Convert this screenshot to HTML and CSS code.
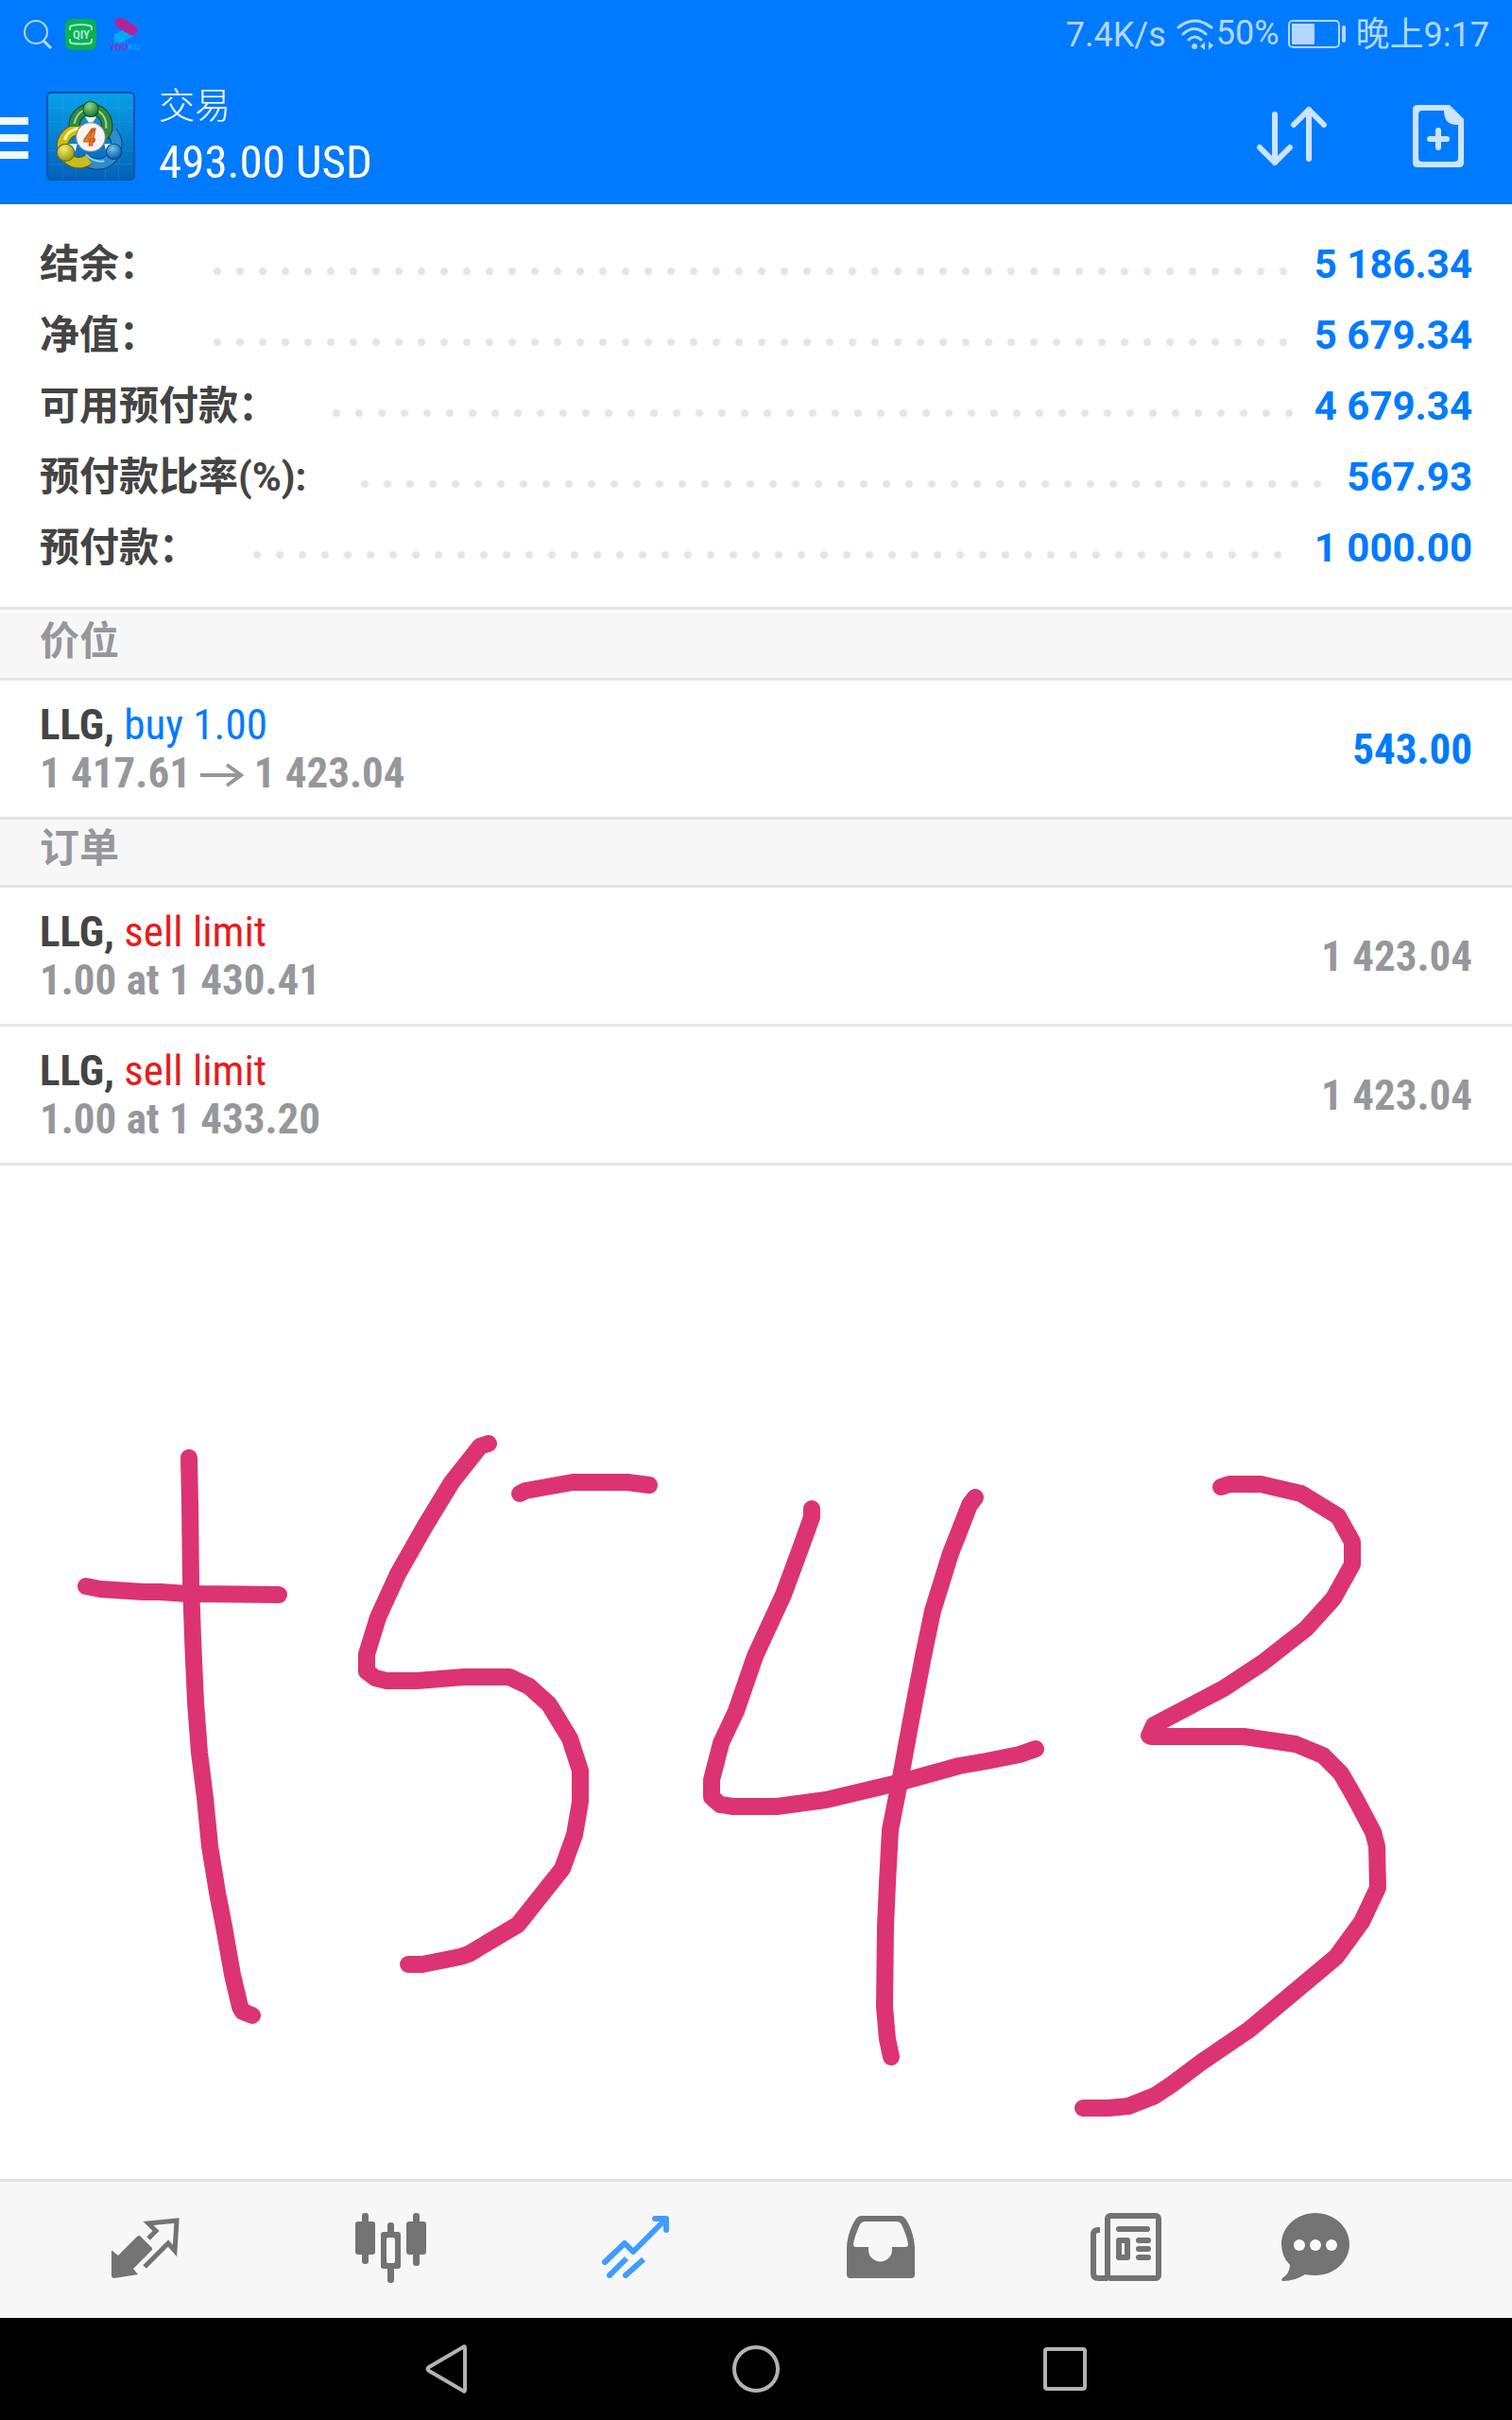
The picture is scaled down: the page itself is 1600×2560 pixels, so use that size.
FILE: index.html
```html
<!DOCTYPE html>
<html lang="zh-CN">
<head>
  <meta charset="UTF-8">
  <meta name="viewport" content="width=device-width, initial-scale=1">
  <title>交易</title>
  <link rel="stylesheet" href="styles.css">
</head>
<body>

<header class="top">
  <div class="status-bar">
    <div class="status-left">
      <svg width="32" height="38" viewBox="0 0 32 38" aria-hidden="true">
        <circle cx="14" cy="16" r="12" fill="none" stroke="#b3d7ff" stroke-width="2"/>
        <path d="M22 25l8 8" stroke="#b3d7ff" stroke-width="3"/>
      </svg>
      <svg width="34" height="38" viewBox="0 0 34 38" aria-hidden="true">
        <rect y="2" width="33" height="33" rx="7" fill="#07b04e"/>
        <path d="M5 14V12Q5 9 8 9Q17 7 25 9Q28 9 28 12V14M5 23V25Q5 28 8 28Q17 29 25 28Q28 28 28 25V23" fill="none" stroke="#a5e3d6" stroke-width="2"/>
        <text x="17" y="23" class="qiy">QIY</text>
      </svg>
      <svg width="38" height="38" viewBox="0 0 38 38" aria-hidden="true">
        <path d="M10 22L23 15" stroke="#00a8ff" stroke-width="11" stroke-linecap="round"/>
        <path d="M11 6L24 14" stroke="#b2249c" stroke-width="11" stroke-linecap="round"/>
        <text x="0" y="35" class="youku"><tspan fill="#a02bab">YOU</tspan><tspan fill="#00a8ff">KU</tspan></text>
      </svg>
    </div>
    <div class="status-right">
      <span class="net-speed">7.4K/s</span>
      <svg width="40" height="34" viewBox="0 0 40 34" fill="none" stroke="#b3d7ff" stroke-width="3" stroke-linecap="round" aria-hidden="true">
        <path d="M2 9Q19 -5 37 9M7 16Q19 5 31 16M13 22Q19 16 26 22"/>
        <circle cx="19" cy="29" r="3" fill="#b3d7ff" stroke="none"/>
        <path d="M25 29l5-5v9zM39 28l-5 5v-9z" fill="#b3d7ff" stroke="none"/>
      </svg>
      <span class="percent">50%</span>
      <svg class="battery" width="62" height="30" viewBox="0 0 62 30" aria-hidden="true">
        <rect x="1" y="1" width="53" height="28" rx="4" fill="none" stroke="#b3d7ff" stroke-width="2"/>
        <rect x="4" y="4" width="24" height="22" rx="1" fill="#b3d7ff"/>
        <rect x="57" y="6" width="4" height="18" rx="2" fill="#b3d7ff"/>
      </svg>
      <span class="clock">晚上9:17</span>
    </div>
  </div>

  <div class="app-bar">
    <button class="menu-btn" aria-label="菜单"><i></i><i></i><i></i></button>
    <svg class="logo" width="94" height="94" viewBox="0 0 92 92" aria-hidden="true">
      <defs>
        <linearGradient id="bg" x1="0" y1="0" x2="0" y2="1">
          <stop offset="0" stop-color="#0aa0ea"/>
          <stop offset="1" stop-color="#0461b8"/>
        </linearGradient>
        <radialGradient id="green" cx=".4" cy=".3" r=".7">
          <stop offset="0" stop-color="#8fd48f"/>
          <stop offset="1" stop-color="#1c7a2c"/>
        </radialGradient>
        <radialGradient id="yellow" cx=".4" cy=".3" r=".7">
          <stop offset="0" stop-color="#f2ee74"/>
          <stop offset="1" stop-color="#9c9410"/>
        </radialGradient>
        <radialGradient id="blue" cx=".4" cy=".3" r=".7">
          <stop offset="0" stop-color="#6fc6f5"/>
          <stop offset="1" stop-color="#0b5ca8"/>
        </radialGradient>
      </defs>
      <rect x="1" y="1" width="90" height="90" rx="4" fill="url(#bg)" stroke="#0656a8" stroke-width="2"/>
      <path d="M17 2V90M31 2V90M61 2V90M75 2V90M2 17H90M2 31H90M2 61H90M2 75H90" stroke="#3fb4f0" stroke-opacity=".2"/>
      <g fill="none">
        <path d="M38 68A17 17 0 1 0 68 42" stroke="#064a86" stroke-width="12"/>
        <path d="M38 68A17 17 0 1 0 68 42" stroke="#2f8bcb" stroke-width="10"/>
        <path d="M41 65Q48 73 60 72" stroke="#8fd0f5" stroke-width="2"/>
        <path d="M38 40A17 17 0 1 0 44 70" stroke="#6b6208" stroke-width="12"/>
        <path d="M38 40A17 17 0 1 0 44 70" stroke="#c9bc1c" stroke-width="10"/>
        <path d="M19 50Q22 40 33 38" stroke="#f7f08a" stroke-width="3"/>
        <path d="M29 36A17 17 0 1 1 59 46" stroke="#0f4f1a" stroke-width="12"/>
        <path d="M29 36A17 17 0 1 1 59 46" stroke="#338a3b" stroke-width="10"/>
        <path d="M29 33Q31 23 39 19M54 20Q63 26 62 38" stroke="#9bd69b" stroke-width="2"/>
      </g>
      <path d="M40 26h12l-6 9zM22 54l10 0-2 8zM60 54h10l-8 8z" fill="#eef6ee"/>
      <circle cx="46" cy="18" r="8" fill="url(#green)" stroke="#0f4f1a"/>
      <circle cx="20" cy="63" r="9" fill="url(#yellow)" stroke="#6b6208"/>
      <circle cx="70" cy="62" r="8" fill="url(#blue)" stroke="#064a86"/>
      <circle cx="46" cy="47" r="15" fill="#f6f4f4" stroke="#8b8b8b"/>
      <text x="45" y="56" class="logo-num">4</text>
    </svg>
    <div class="heading">
      <h1>交易</h1>
      <p>493.00 USD</p>
    </div>
    <button class="icon-btn" aria-label="排序">
      <svg width="76" height="66" viewBox="0 0 76 66" fill="none" stroke="#cce4ff" stroke-width="6" stroke-linecap="round" stroke-linejoin="round">
        <path d="M20 10V61M4 45L20 61L36 45M56 57V5M40 21L56 5L72 21"/>
      </svg>
    </button>
    <button class="icon-btn" aria-label="新订单">
      <svg width="54" height="66" viewBox="0 0 54 66">
        <path d="M5 0H39L54 15V61Q54 66 49 66H5Q0 66 0 61V5Q0 0 5 0ZM10 6Q6 6 6 10V56Q6 60 10 60H44Q48 60 48 56V21H45Q33 20 33 6Z" fill="#cce4ff" fill-rule="evenodd"/>
        <path d="M27 27V45M18 36H36" stroke="#cce4ff" stroke-width="6" stroke-linecap="round"/>
      </svg>
    </button>
  </div>
</header>

<main>
  <dl class="account">
    <div class="account-row"><dt>结余：</dt><dd>5 186.34</dd></div>
    <div class="account-row"><dt>净值：</dt><dd>5 679.34</dd></div>
    <div class="account-row"><dt>可用预付款：</dt><dd>4 679.34</dd></div>
    <div class="account-row"><dt>预付款比率(%):</dt><dd>567.93</dd></div>
    <div class="account-row"><dt>预付款：</dt><dd>1 000.00</dd></div>
  </dl>

  <h2 class="section-title">价位</h2>
  <ul class="deals">
    <li>
      <div>
        <p class="symbol"><b>LLG,</b> <span class="buy">buy 1.00</span></p>
        <p class="detail">1 417.61
          <svg width="46" height="26" viewBox="0 0 46 26" fill="none" stroke="#96979b" stroke-width="4" role="img" aria-label="至"><path d="M0 13H43M28 2L43 13L28 24"/></svg>
          1 423.04</p>
      </div>
      <span class="amount profit">543.00</span>
    </li>
  </ul>

  <h2 class="section-title">订单</h2>
  <ul class="deals">
    <li>
      <div>
        <p class="symbol"><b>LLG,</b> <span class="sell">sell limit</span></p>
        <p class="detail">1.00 at 1 430.41</p>
      </div>
      <span class="amount">1 423.04</span>
    </li>
    <li>
      <div>
        <p class="symbol"><b>LLG,</b> <span class="sell">sell limit</span></p>
        <p class="detail">1.00 at 1 433.20</p>
      </div>
      <span class="amount">1 423.04</span>
    </li>
  </ul>

  <!-- handwritten note -->
  <svg class="note" viewBox="0 0 1600 1072" role="img" aria-label="+543">
    <path d="M91 445L106 448L121 449L152 451L170 451L198 453L295 454"/>
    <path d="M200 309L201 359L202 441L204 500L207 568L211 621L217 669L222 720L230 769L237 805L246 856L254 890L257 895L267 899"/>
    <path d="M517 294L508 297L478 335L450 381L421 432L400 478L388 517L388 535L397 542L409 545L441 545L491 541L539 541L560 551L581 570L603 606L614 640L614 673L608 708L595 744L583 759L548 803L496 834L487 837L447 845L432 845"/>
    <path d="M550 347L556 344L606 335L664 335L687 338"/>
    <path d="M859 363L859 372L846 408L829 454L799 519L779 577L763 611L753 650L753 668L762 676L776 678L822 678L874 671L950 653L1015 635L1044 630L1079 623L1096 617"/>
    <path d="M1032 351L1026 359L1006 410L987 471L977 519L964 587L953 647L942 703L939 759L937 805L936 890L939 924L943 943"/>
    <path d="M1292 340L1301 337L1334 337L1377 347L1416 371L1431 398L1431 422L1411 458L1382 490L1336 526L1295 553L1221 592L1216 603L1218 604L1316 604L1371 612L1400 624L1419 643L1434 669L1453 705L1457 720L1458 764L1441 800L1414 837L1322 914L1272 948L1240 972L1222 984L1194 995L1173 997L1146 997"/>
  </svg>
</main>

<nav class="tabs">
  <button aria-label="行情">
    <svg width="80" height="80" viewBox="0 0 80 80">
      <path d="M4 41L10 46L30 26Q32 24 34 26L46 38Q47 40 45 41L26 60L31 66L6 70Q3 70 3 67V41Z"/>
      <path d="M42 28L50 20L42 12L72 9L70 41L63 33L38 58" fill="none" stroke="#737373" stroke-width="5"/>
    </svg>
  </button>
  <button aria-label="图表">
    <svg width="80" height="80" viewBox="0 0 80 80">
      <rect x="2" y="10" width="21" height="35" rx="3"/>
      <rect x="9" y="1" width="7" height="54" rx="3"/>
      <path d="M32 21H36V14Q36 11 39 11H40Q43 11 43 14V21H47Q50 21 50 24V57Q50 60 47 60H43V72Q43 75 40 75H39Q36 75 36 72V60H32Q29 60 29 57V24Q29 21 32 21ZM37 27Q35 27 35 29V52Q35 54 37 54H42Q44 54 44 52V29Q44 27 42 27Z" fill-rule="evenodd"/>
      <rect x="56" y="10" width="21" height="35" rx="3"/>
      <rect x="63" y="1" width="7" height="56" rx="3"/>
    </svg>
  </button>
  <button aria-label="交易">
    <svg width="80" height="80" viewBox="0 0 80 80" fill="none" stroke="#419cff" stroke-width="6">
      <path d="M7 53L28 33L37 42L71 8M60 7H72V19" stroke-linecap="round" stroke-linejoin="round"/>
      <path d="M12 67L30 49M29 67L48 50"/>
      <circle cx="12" cy="67" r="3" class="tip"/>
      <circle cx="29" cy="67" r="3" class="tip"/>
    </svg>
  </button>
  <button aria-label="历史">
    <svg width="80" height="80" viewBox="0 0 80 80">
      <path d="M4 37C5 24 9 14 14 7Q16 4 19 4H61Q64 4 66 7C71 14 75 24 76 37V66Q76 70 72 70H8Q4 70 4 66ZM11 34C12 27 15 20 18 13Q20 10 23 10H57Q60 10 62 13C65 20 68 27 69 34Q69 37 66 37H52V40A12 12 0 0 1 27 40V37H14Q11 37 11 34Z" fill-rule="evenodd"/>
    </svg>
  </button>
  <button aria-label="新闻">
    <svg width="80" height="80" viewBox="0 0 80 80" fill="none" stroke="#737373" stroke-width="6">
      <rect x="21" y="4" width="54" height="66" rx="3"/>
      <path d="M13 19H11Q6 19 6 24V65Q6 70 11 70H21"/>
      <rect x="33" y="30" width="9" height="18" stroke-linejoin="round"/>
      <path d="M33 18H63M54 30H64M54 39H64M54 48H64" stroke-linecap="round"/>
    </svg>
  </button>
  <button aria-label="消息">
    <svg width="80" height="80" viewBox="0 0 80 80">
      <path d="M40 1C60 1 76 16 76 34S60 67 40 67Q34 67 29 66Q18 73 6 73Q3 73 5 70Q13 65 13 56Q4 47 4 34C4 16 20 1 40 1Z"/>
      <circle cx="23" cy="35" r="6" fill="#fafafa"/>
      <circle cx="40" cy="35" r="6" fill="#fafafa"/>
      <circle cx="57" cy="35" r="6" fill="#fafafa"/>
    </svg>
  </button>
</nav>

<div class="system-nav">
  <button aria-label="返回">
    <svg width="50" height="54" viewBox="0 0 50 54"><path d="M42 4Q44 2 44 5V49Q44 52 42 50L6 29Q3 27 6 25Z"/></svg>
  </button>
  <button aria-label="主页">
    <svg width="50" height="54" viewBox="0 0 50 54"><circle cx="25" cy="27" r="23"/></svg>
  </button>
  <button aria-label="最近任务">
    <svg width="50" height="54" viewBox="0 0 50 54"><rect x="4" y="6" width="42" height="42" rx="2"/></svg>
  </button>
</div>

</body>
</html>
```
FILE: styles.css
```css
* {
  box-sizing: border-box;
}

body {
  margin: 0;
  min-height: 100vh;
  display: flex;
  flex-direction: column;
  background: #fff;
  color: #444;
  font-family: Roboto, "Noto Sans CJK SC", sans-serif;
}

h1, h2, p, dl, dd, ul {
  margin: 0;
  padding: 0;
}

button {
  display: flex;
  align-items: center;
  justify-content: center;
  padding: 0;
  border: none;
  background: none;
  cursor: pointer;
}

svg {
  display: block;
  flex-shrink: 0;
}

/* header */
.top {
  background: #007aff;
  border-bottom: 3px solid #006fe8;
}

.status-bar {
  height: 74px;
  padding: 0 24px;
  display: flex;
  align-items: center;
  justify-content: space-between;
  color: #b3d7ff;
  font-size: 36px;
  line-height: 40px;
}

.status-left {
  display: flex;
  gap: 13px;
}

.status-right {
  display: flex;
  align-items: center;
}

.net-speed {
  margin-right: 11px;
}

.percent {
  margin: 0 9px 4px 2px;
}

.battery {
  margin: 0 10px 2px 0;
}

.qiy {
  font: bold 13px "Roboto Condensed", "Liberation Sans", sans-serif;
  fill: #a5e3d6;
  text-anchor: middle;
}

.youku {
  font: bold 9px "Liberation Sans", sans-serif;
}

.app-bar {
  height: 139px;
  padding-right: 51px;
  display: flex;
  align-items: center;
}

.menu-btn {
  width: 30px;
  padding-top: 4px;
  flex-direction: column;
  gap: 10px;
}

.menu-btn i {
  width: 30px;
  height: 8px;
  background: #f0f7ff;
}

.logo {
  margin: 0 25px 0 19px;
}

.logo-num {
  font: italic bold 26px "Roboto Condensed", "Liberation Sans", sans-serif;
  fill: #f08a24;
  stroke: #c4521a;
  stroke-width: 1;
  text-anchor: middle;
}

.heading {
  margin-right: auto;
  color: #fff;
}

.heading h1 {
  font-size: 38px;
  font-weight: 300;
  line-height: 56px;
}

.heading p {
  font: 49px/64px "Roboto Condensed", "Liberation Sans Narrow", Roboto, sans-serif;
}

.icon-btn + .icon-btn {
  margin-left: 90px;
}

/* account summary */
main {
  flex: 1;
  display: flex;
  flex-direction: column;
}

.account {
  padding: 26px 42px 25px;
  border-bottom: 3px solid #e4e4e4;
  margin-bottom: 3px;
}

.account-row {
  display: flex;
  height: 75px;
  line-height: 75px;
  font-size: 42px;
}

.account-row dt {
  font-weight: bold;
}

/* dotted leader between label and value */
.account-row::after {
  content: "";
  order: 1;
  flex: 1;
  margin: 40px 22px 0 57px;
  height: 10px;
  background: radial-gradient(circle at 5px 5px, #e4e4e4 3px, transparent 5px) 0 0 / 24px 10px repeat-x;
}

.account-row dd {
  order: 2;
  color: #007aff;
  font-weight: bold;
}

/* positions and orders */
.section-title {
  height: 72px;
  padding: 0 42px 8px;
  background: #f7f7f7;
  border-bottom: 3px solid #e4e4e4;
  color: #96979b;
  font-size: 42px;
  font-weight: bold;
  line-height: 61px;
}

.deals {
  list-style: none;
  font-family: "Roboto Condensed", "Liberation Sans Narrow", Roboto, sans-serif;
}

.deals li {
  display: flex;
  align-items: center;
  justify-content: space-between;
  height: 147px;
  padding: 0 42px;
  border-bottom: 3px solid #e4e4e4;
}

.symbol,
.detail {
  font-size: 45px;
  line-height: 51px;
}

.detail {
  color: #96979b;
  font-weight: bold;
}

.detail svg {
  display: inline-block;
}

.buy { color: #007aff; }
.sell { color: #e51c1c; }

.amount {
  color: #96979b;
  font-size: 45px;
  font-weight: bold;
}

.profit {
  color: #007aff;
}

.note {
  width: 100%;
  fill: none;
  stroke: #dc3373;
  stroke-width: 18;
  stroke-linecap: round;
  stroke-linejoin: round;
}

/* bottom tabs */
.tabs {
  display: flex;
  height: 147px;
  padding: 0 137px 0 25px;
  background: #f7f7f7;
  border-top: 3px solid #e4e4e4;
  fill: #737373;
}

.tabs button {
  flex: 259;
}

.tabs button:last-child {
  flex: 143;
}

.tip {
  fill: #419cff;
  stroke: none;
}

.system-nav {
  height: 108px;
  padding: 0 310px;
  display: flex;
  background: #000;
  fill: none;
  stroke: #b3b3b3;
  stroke-width: 4;
}

.system-nav button {
  flex: 1;
}
```
